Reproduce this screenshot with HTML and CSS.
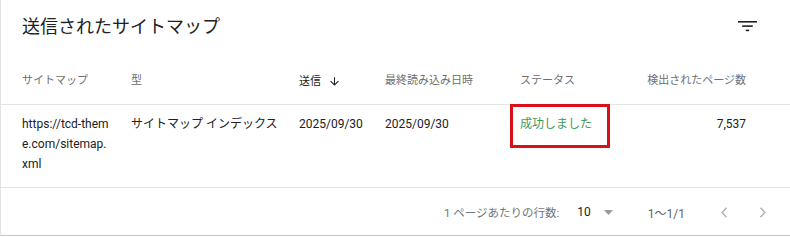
FILE: index.html
```html
<!DOCTYPE html>
<html lang="ja">
<head>
<meta charset="utf-8">
<link rel="stylesheet" href="styles.css">
</head>
<body>
<div class="card">
  <div class="titlebar">
    <h1 class="title">送信されたサイトマップ</h1>
    <svg class="filter" width="19" height="11" viewBox="0 0 19 11"><rect x="0" y="0" width="19" height="1.6" fill="#202124"/><rect x="4.2" y="4.3" width="10.6" height="1.6" fill="#202124"/><rect x="7.8" y="8.6" width="3.4" height="1.6" fill="#202124"/></svg>
  </div>
  <div class="grid head">
    <div class="cell">サイトマップ</div>
    <div class="cell">型</div>
    <div class="cell sorted">送信<svg class="arrow" width="13" height="13" viewBox="0 0 24 24"><path d="M20 12l-1.41-1.41L13 16.17V4h-2v12.17l-5.58-5.59L4 12l8 8 8-8z" fill="#202124"/></svg></div>
    <div class="cell">最終読み込み日時</div>
    <div class="cell">ステータス</div>
    <div class="cell num">検出されたページ数</div>
  </div>
  <div class="grid row">
    <div class="cell url">https://tcd-theme.com/sitemap.xml</div>
    <div class="cell">サイトマップ インデックス</div>
    <div class="cell">2025/09/30</div>
    <div class="cell">2025/09/30</div>
    <div class="cell"><span class="status">成功しました</span></div>
    <div class="cell num">7,537</div>
  </div>
  <div class="footer">
    <span class="rpp">1 ページあたりの行数:</span>
    <span class="size">10</span>
    <svg class="dd" width="9" height="5" viewBox="0 0 9 5"><polygon points="0,0 9,0 4.5,5" fill="#9a9a9a"/></svg>
    <span class="range">1〜1/1</span>
    <svg class="chev prev" width="7" height="11" viewBox="0 0 7 11"><polyline points="5.5,0.8 1.2,5.5 5.5,10.2" fill="none" stroke="#b0b0b0" stroke-width="1.4"/></svg>
    <svg class="chev next" width="7" height="11" viewBox="0 0 7 11"><polyline points="1.5,0.8 5.8,5.5 1.5,10.2" fill="none" stroke="#b0b0b0" stroke-width="1.4"/></svg>
  </div>
</div>
</body>
</html>
```
FILE: styles.css
```css
* { box-sizing: border-box; }
html, body { margin: 0; padding: 0; background: #fff; }
body {
  font-family: Roboto, "Noto Sans CJK JP", sans-serif;
  color: #202124;
  width: 790px;
  height: 237px;
  overflow: hidden;
}
.card {
  border-left: 1px solid #e2e2e2;
  width: 790px;
}
.titlebar {
  height: 54px;
  display: flex;
  align-items: center;
  justify-content: space-between;
  padding-left: 21px;
  padding-right: 33px;
}
.title {
  margin: 0;
  font-size: 18px;
  font-weight: 400;
  line-height: 24px;
  color: #202124;
}
.filter { display: block; margin-top: -2px; }
.grid {
  display: grid;
  grid-template-columns: 109px 168px 86px 135px 125px 101px;
  padding-left: 21px;
  border-bottom: 1px solid #e4e4e4;
}
.head {
  padding-top: 18px;
  padding-bottom: 14px;
  font-size: 11px;
  line-height: 17px;
  color: #6f6f6f;
  height: 51px;
}
.head .sorted { color: #202124; display: flex; align-items: center; }
.arrow { margin-left: 7px; }
.num { text-align: right; }
.row {
  padding-top: 9px;
  padding-bottom: 13px;
  font-size: 12px;
  line-height: 20px;
  color: #202124;
  height: 83px;
}
.url { word-break: break-all; padding-right: 20px; }
.status {
  position: relative;
  display: inline-block;
  vertical-align: top;
  color: #3f9a5d;
}
.status::before {
  content: "";
  position: absolute;
  left: -10px;
  top: -10px;
  width: 94px;
  height: 38px;
  border: 3px solid #d8101a;
}
.footer {
  height: 48px;
  display: flex;
  align-items: center;
  justify-content: flex-end;
  padding-right: 24px;
  font-size: 11.5px;
  color: #70757a;
  border-bottom: 1px solid #c4c4c4;
  padding-top: 1px;
}
.size { margin-left: 18px; color: #202124; font-size: 12px; }
.dd { margin-left: 13px; }
.range { margin-left: 35px; color: #5f6368; font-size: 12px; }
.prev { margin-left: 36px; }
.next { margin-left: 31px; }
```
